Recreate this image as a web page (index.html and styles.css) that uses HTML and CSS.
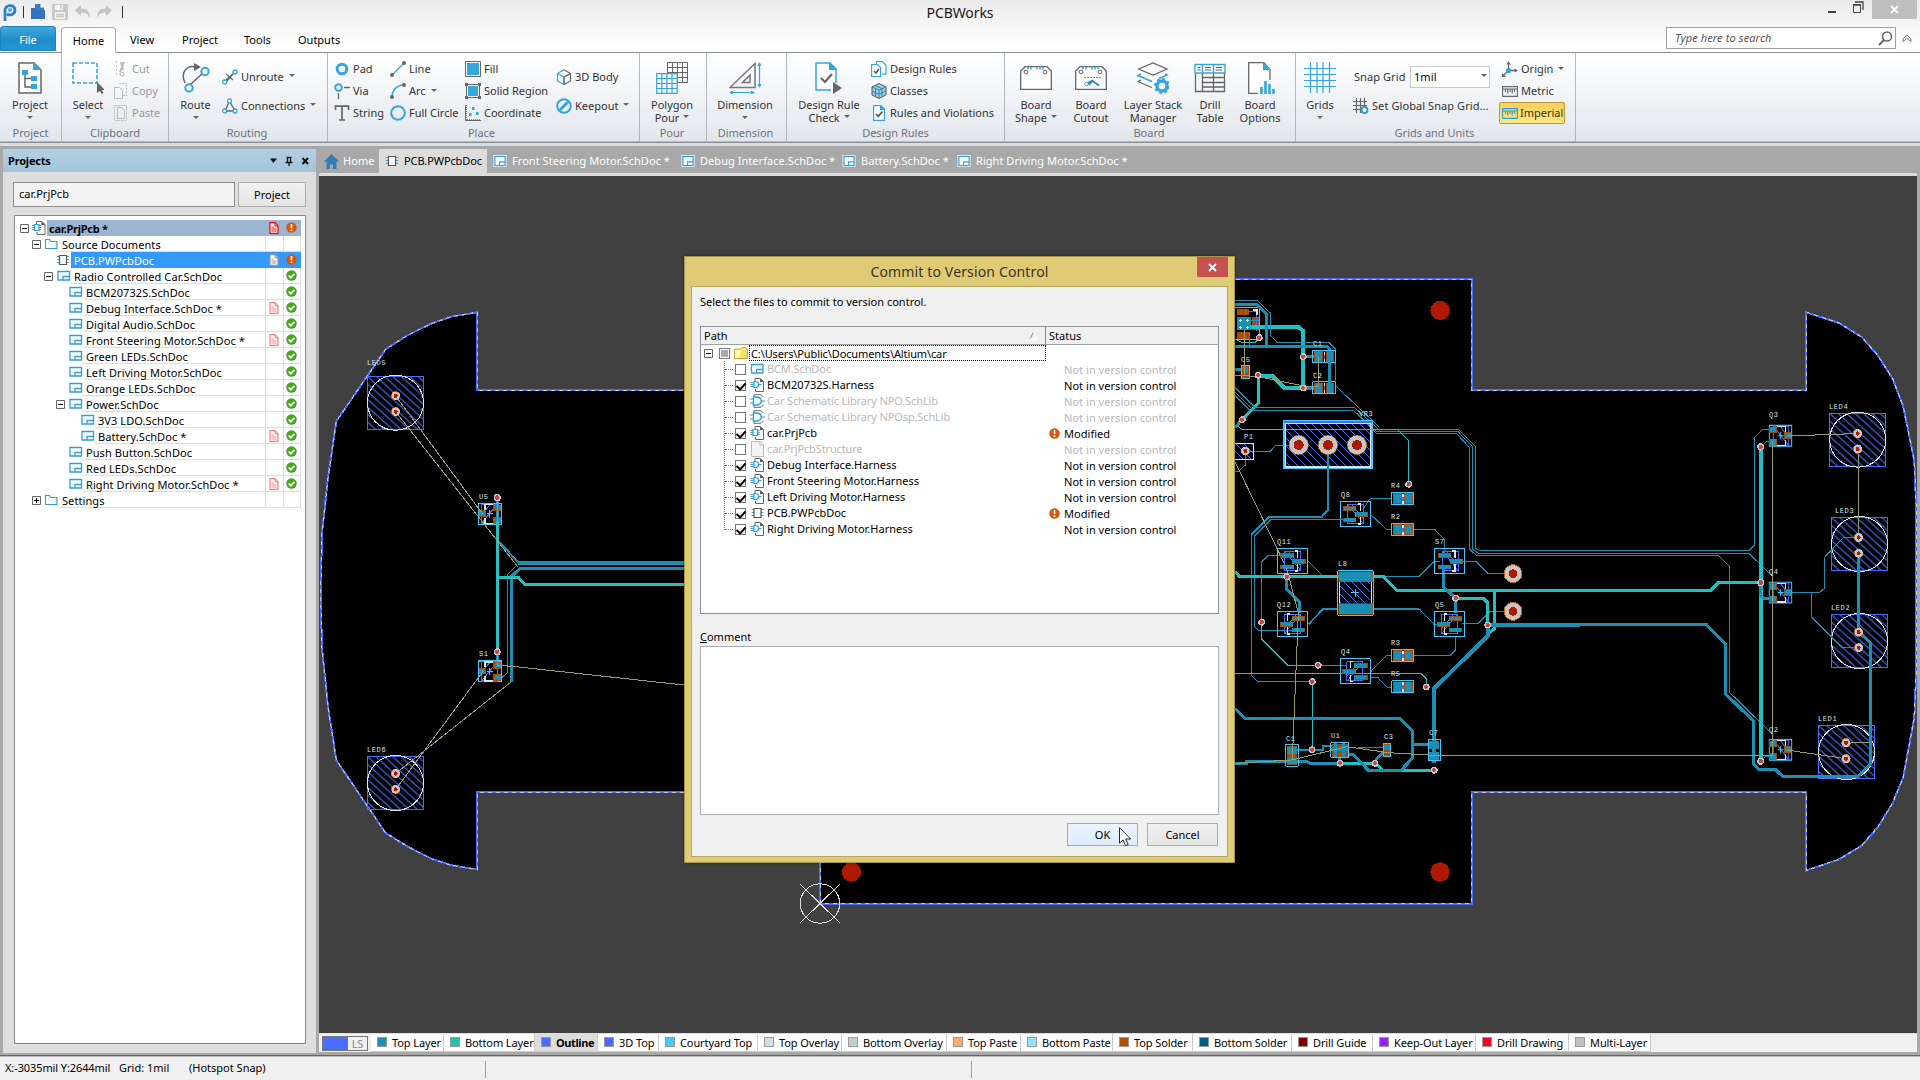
FILE: index.html
```html
<!DOCTYPE html>
<html lang="en">
<head>
<meta charset="utf-8">
<title>PCBWorks</title>
<link rel="stylesheet" href="styles.css">
</head>
<body>
<svg class="defs" width="0" height="0" aria-hidden="true">
  <defs>
    <symbol id="i-sch" viewBox="0 0 14 12"><path d="M1 1.500h11.500v8.500H1zM6 10V6.500h6.500" fill="none" stroke="#2f9fd8" stroke-width="1.300"/></symbol>
    <symbol id="i-schw" viewBox="0 0 14 13"><path d="M0 0h14v13H0z" fill="#fff"/><path d="M1.500 1.500h11v10h-11zM6.500 11.500V7.500h6" fill="none" stroke="#2f9fd8" stroke-width="1.300"/></symbol>
    <symbol id="i-pcb" viewBox="0 0 12 12"><path d="M0 2.500h12M0 5.500h12M0 8.500h12" stroke="#2f9fd8"/><path d="M2.500 1.500h7v9h-7z" fill="#fff" stroke="#555" stroke-width="1.200"/></symbol>
    <symbol id="i-folder" viewBox="0 0 13 12"><path d="M.5 10.500v-9h4l1.500 2h6v7z" fill="none" stroke="#2f9fd8" stroke-width="1.200"/></symbol>
    <symbol id="i-prj" viewBox="0 0 14 14"><path d="M4.500 3V.5h5.500l3 3v10H5V11" fill="#fff" stroke="#666"/><path d="M9.500.5v3.500H13z" fill="#555"/><path d="M0 4.500h9M0 6.500h9M0 8.500h9" stroke="#2f9fd8"/><path d="M2.500 3.500h4.500v6H2.500z" fill="#fff" stroke="#2f9fd8" stroke-width="1.200"/></symbol>
    <symbol id="i-har" viewBox="0 0 14 14"><path d="M4.500 3V.5h5.500l3 3v10H5V11" fill="#fff" stroke="#666"/><path d="M9.500.5v3.500H13z" fill="#555"/><path d="M0 4.500h3M0 6.500h3M0 8.500h3M8 6.500h3" stroke="#2f9fd8"/><path d="M3.500 3.500h2c3.500.5 3.500 5.500 0 6h-2z" fill="#fff" stroke="#2f9fd8" stroke-width="1.200"/></symbol>
    <symbol id="i-lib" viewBox="0 0 15 14"><path d="M4 3V.7h7l2.500 2.500M4 11v2.300h7l2.500-2.500" fill="none" stroke="#666"/><path d="M0 5h3.500M0 9h3.500M11 7h4" stroke="#2f9fd8" stroke-width="1.200"/><path d="M3.500 3h4c5 1 5 7 0 8h-4z" fill="#fff" stroke="#2f9fd8" stroke-width="1.400"/></symbol>
    <symbol id="i-blank" viewBox="0 0 14 16"><path d="M1 .5h9l3 3v12H1z" fill="#f4f4f4" stroke="#bbb"/><path d="M9.500.5V4H13" fill="#fff" stroke="#bbb"/></symbol>
    <symbol id="i-dir" viewBox="0 0 14 13"><path d="M.5 11.500V2h6l1.500-1.500h3.500L13.500 3v8.500z" fill="#f6e56a" stroke="#c3a92d"/><path d="M1 11V3h6.500L5 11z" fill="#fffbb0"/></symbol>
    <symbol id="i-doc" viewBox="0 0 10 12"><path d="M1 .7h5l3 3v7.600H1z" fill="#fff" stroke="currentColor" stroke-width="1.200"/><path d="M6 .7v3.300h3M2.500 5h2M2.500 7h5M2.500 9h5" fill="none" stroke="currentColor"/></symbol>
    <symbol id="i-ok" viewBox="0 0 11 11"><circle cx="5.500" cy="5.500" r="5.200" fill="#3fa616"/><path d="M2.600 5.400l2.100 2.200 3.700-3.700" fill="none" stroke="#fff" stroke-width="1.800"/></symbol>
    <symbol id="i-warn" viewBox="0 0 11 11"><circle cx="5.500" cy="5.500" r="5.200" fill="#d8560c"/><path d="M5.500 2v4.200M5.500 7.500v1.600" stroke="#fff" stroke-width="1.700"/></symbol>
    <symbol id="i-minus" viewBox="0 0 9 9"><path d="M.5.5h8v8h-8z" fill="#fff" stroke="#666"/><path d="M2 4.500h5" stroke="#000"/></symbol>
    <symbol id="i-plus" viewBox="0 0 9 9"><path d="M.5.5h8v8h-8z" fill="#fff" stroke="#666"/><path d="M2 4.500h5M4.500 2v5" stroke="#000"/></symbol>
    <symbol id="i-ruler" viewBox="0 0 16 11"><path d="M.6.6h14.800v9.800H.6zM.6 3h14.800M3.500 3v3M5.700 3v4.500M8 3v3M10.200 3v4.500M12.500 3v3" fill="none" stroke="currentColor" stroke-width="1.100"/></symbol>

    <pattern id="hatch" width="8.400" height="7.600" patternUnits="userSpaceOnUse"><path d="M-1-.9L9.400 8.500M-1 6.700L1 8.500M7.400-.9L9.400.9" stroke="#4a6cff" stroke-width="1.100"/></pattern>
    <pattern id="hatch2" width="24" height="24" patternUnits="userSpaceOnUse"><path d="M-2-2L26 26" stroke="#4a6cff" stroke-width="3"/></pattern>
    <g id="via"><circle r="10" fill="#c6c6c6"/><path d="M-6 0H6M0-6V6" stroke="#c04848" stroke-width="7"/></g>
    <g id="pad"><ellipse rx="14" ry="12.600" fill="#c06010"/><ellipse rx="12.500" ry="11.500" fill="#c6c6c6"/><ellipse rx="6" ry="5.800" fill="#b01800"/></g>
    <g id="led"><path d="M0 0h56.300v53H0z" fill="url(#hatch)" stroke="#4a6cff"/><ellipse cx="28.200" cy="26.500" rx="28" ry="27.500" fill="none" stroke="#d8e8ea"/></g>
    <g id="sot"><path d="M0 0h90v76H0z" fill="none" stroke="#44c8ff" stroke-width="3"/><path d="M22 9h48v58H22zM22 9l46 56M34 9l34 42" fill="none" stroke="#4a6cff" stroke-width="3"/><path d="M8 14h40v14H8zM8 49h40v14H8zM44 32h40v14H44z" fill="#a84a00"/><path d="M12 16h36v11H12zM12 51h36v11H12zM44 33h36v12H44z" fill="#1c8fb5"/><path d="M52 8h8v20M52 68h8V48" fill="none" stroke="#d8e8ea" stroke-width="4"/></g>
    <g id="res"><path d="M0 0h67v37H0z" fill="none" stroke="#44c8ff" stroke-width="3"/><path d="M4 3h26v32H4zM38 3h26v32H38z" fill="#a84a00"/><path d="M7 5h20v28H7zM41 5h20v28H41z" fill="#1c8fb5"/><path d="M34 4v9M34 25v9" stroke="#d8e8ea" stroke-width="4"/><path d="M34 13v12" stroke="#4a6cff" stroke-width="4"/></g>
    <g id="trn"><path d="M0 0h67v56H0z" fill="none" stroke="#44c8ff" stroke-width="3"/><path d="M12 2h46v52H12zM14 4l42 48M34 4l22 26" fill="none" stroke="#4a6cff" stroke-width="3"/><path d="M24 3h24v14M24 54h24V40" fill="none" stroke="#d8e8ea" stroke-width="4"/><path d="M0 3h23v18H0zM0 36h23v18H0zM45 19h21v17H45z" fill="#a84a00"/><path d="M1 5h18v14H1zM1 38h18v14H1zM47 21h18v13H47z" fill="#1c8fb5"/><path d="M34 18v20M25 28h18" stroke="#44c8ff" stroke-width="3"/></g>
  </defs>
</svg>

<header class="titlebar">
  <div class="caption">
    <div class="quick">
      <svg class="q-logo" width="14" height="18" viewBox="0 0 14 18"><path d="M2 17V6.500C2 0 12 0 12 6c0 4.500-5 6-8 4" fill="none" stroke="#2e7fc6" stroke-width="2.800"/><circle cx="7" cy="6" r="2" fill="#4da7e0"/></svg>
      <i class="bar"></i>
      <svg class="q-open" width="15" height="16" viewBox="0 0 15 16"><path d="M4 0h5.500L13 3.500V12H4z" fill="#3b7dc4"/><path d="M9.500 0v3.500H13z" fill="#fff"/><path d="M0 4h5l2 2h7v9H0z" fill="#3173be"/></svg>
      <svg class="q-save" width="16" height="16" viewBox="0 0 16 16"><path d="M0 0h16v16H0z" fill="#c9c9c9"/><path d="M3 1h8v5H3zM3 8h10v7H3z" fill="#f3f3f3"/><path d="M9 1v4M4 10.500h8M4 12.500h8" stroke="#c9c9c9" stroke-width="1.500"/></svg>
      <svg class="q-undo" width="16" height="14" viewBox="0 0 16 14"><path d="M0 5.500L6 0v3.500c6 0 9 3 9 10C13 9 11 7.500 6 7.500V11z" fill="#c4c4c4"/></svg>
      <svg class="q-redo" width="16" height="14" viewBox="0 0 16 14"><path d="M16 5.500L10 0v3.500c-6 0-9 3-9 10C3 9 5 7.500 10 7.500V11z" fill="#c4c4c4"/></svg>
      <i class="bar"></i>
    </div>
    <div class="apptitle">PCBWorks</div>
    <div class="winbtns">
      <svg width="36" height="14" viewBox="0 0 36 14"><path d="M0 12h8" stroke="#444" stroke-width="2"/><path d="M25.500 4.500h7v8h-7z" fill="none" stroke="#444"/><path d="M25 5h8M27 2h8v8" fill="none" stroke="#444" stroke-width="1.300"/></svg>
      <div class="winclose"><svg width="9" height="9" viewBox="0 0 9 9"><path d="M1 1l7 7M8 1L1 8" stroke="#fff" stroke-width="1.800"/></svg></div>
    </div>
  </div>
  <nav class="menubar">
    <span class="file">File</span>
    <span class="mtab on">Home</span>
    <span class="mtab m-view">View</span>
    <span class="mtab m-proj">Project</span>
    <span class="mtab m-tools">Tools</span>
    <span class="mtab m-out">Outputs</span>
    <div class="search"><span>Type here to search</span><svg width="15" height="15" viewBox="0 0 15 15"><circle cx="9" cy="5.500" r="4.500" fill="none" stroke="#666" stroke-width="1.500"/><path d="M6 9l-5 5" stroke="#666" stroke-width="2"/></svg></div>
    <svg class="chev" width="10" height="9" viewBox="0 0 10 9"><path d="M1 5l4-4 4 4v2.500L5 4.500 1 7.500z" fill="none" stroke="#777f88" stroke-width="1"/></svg>
  </nav>
</header>

<section class="ribbon">
  <div class="group g1"><div class="gbody">
    <div class="big"><svg width="32" height="32" viewBox="0 0 32 32"><path d="M5 1h15l7 7v23H5z" fill="#fff" stroke="#666" stroke-width="1.500"/><path d="M19 0v8h8z" fill="#36a5dd"/><path d="M11 12v13h6M11 16.500h6" fill="none" stroke="#666" stroke-width="1.500"/><path d="M8 8h6v5H8zM17 14h6v5h-6zM17 22h6v5h-6z" fill="#36a5dd"/></svg><span>Project</span><span><b class="solo"></b></span></div>
  </div><div class="glabel">Project</div></div>

  <div class="group g2"><div class="gbody">
    <div class="big"><svg width="32" height="32" viewBox="0 0 32 32"><path d="M1 1h24v20H1z" fill="none" stroke="#36a5dd" stroke-width="1.600" stroke-dasharray="4 2"/><path d="M25 20v11l3-2 1.500 3 2-1-1.500-3h3z" fill="#666"/></svg><span>Select</span><span><b class="solo"></b></span></div>
    <div class="col dim">
      <div class="cmd"><svg width="16" height="16" viewBox="0 0 16 16"><path d="M3.500 0v16" stroke="#ccc" stroke-dasharray="2 2"/><path d="M11 1L7 11M8 1l2 8" stroke="#bbb" stroke-width="2"/><circle cx="9" cy="13" r="2" fill="none" stroke="#bbb"/></svg>Cut</div>
      <div class="cmd"><svg width="16" height="16" viewBox="0 0 16 16"><path d="M1.500 4.500h5l3 3v8h-8z" fill="none" stroke="#bbb"/><path d="M6 .5h7.500v12H10" fill="none" stroke="#bbb" stroke-dasharray="2 1"/></svg>Copy</div>
      <div class="cmd"><svg width="16" height="16" viewBox="0 0 16 16"><path d="M4.500 2.500h4l3 3v8h-7z" fill="none" stroke="#bbb"/><path d="M1.500.5h12v15h-12z" fill="none" stroke="#bbb" stroke-dasharray="2 1"/></svg>Paste</div>
    </div>
  </div><div class="glabel">Clipboard</div></div>

  <div class="group g3"><div class="gbody">
    <div class="big"><svg width="32" height="32" viewBox="0 0 32 32"><path d="M5 21C0 10 7 3 16 5" fill="none" stroke="#666" stroke-width="1.500"/><path d="M14 1l7 4-7 4z" fill="#666"/><path d="M10 23L23 11" stroke="#666" stroke-width="1.500"/><circle cx="25" cy="9.500" r="3.700" fill="#fff" stroke="#36a5dd" stroke-width="2"/><circle cx="9" cy="26" r="3.700" fill="#fff" stroke="#36a5dd" stroke-width="2"/></svg><span>Route</span><span><b class="solo"></b></span></div>
    <div class="col two">
      <div class="cmd"><svg width="16" height="16" viewBox="0 0 16 16"><path d="M4 11l8-7M4 5l7 6M11 5l-6 7" stroke="#666" stroke-width="1.300"/><circle cx="13" cy="3" r="2" fill="#fff" stroke="#36a5dd" stroke-width="1.300"/><circle cx="2.700" cy="13" r="2" fill="#fff" stroke="#36a5dd" stroke-width="1.300"/></svg>Unroute<b></b></div>
      <div class="cmd"><svg width="16" height="16" viewBox="0 0 16 16"><path d="M3 13L7.500 3 13 13z" fill="none" stroke="#666" stroke-width="1.300"/><circle cx="7.500" cy="3" r="2" fill="#fff" stroke="#36a5dd" stroke-width="1.300"/><circle cx="2.700" cy="13" r="2" fill="#fff" stroke="#36a5dd" stroke-width="1.300"/><circle cx="13" cy="13" r="2" fill="#fff" stroke="#36a5dd" stroke-width="1.300"/></svg>Connections<b></b></div>
    </div>
  </div><div class="glabel">Routing</div></div>

  <div class="group g4"><div class="gbody">
    <div class="col c1">
      <div class="cmd"><svg width="16" height="16" viewBox="0 0 16 16"><circle cx="8" cy="8" r="4.800" fill="none" stroke="#36a5dd" stroke-width="3"/></svg>Pad</div>
      <div class="cmd"><svg width="16" height="16" viewBox="0 0 16 16"><circle cx="4.500" cy="4.500" r="3.300" fill="none" stroke="#36a5dd" stroke-width="2"/><path d="M10 4.500h6M4.500 10v6" stroke="#666" stroke-width="1.300"/></svg>Via</div>
      <div class="cmd"><svg width="16" height="16" viewBox="0 0 16 16"><path d="M1.500 5V1.200h13V5M8 1v14M5 15h6" fill="none" stroke="#666" stroke-width="1.700"/></svg>String</div>
    </div>
    <div class="col c2">
      <div class="cmd"><svg width="16" height="16" viewBox="0 0 16 16"><path d="M2 14L14 2" stroke="#36a5dd" stroke-width="1.300"/><circle cx="2" cy="14" r="2" fill="#666"/><circle cx="14" cy="2" r="2" fill="#666"/></svg>Line</div>
      <div class="cmd"><svg width="16" height="16" viewBox="0 0 16 16"><path d="M2 14C2 7 7 2 14 2" fill="none" stroke="#36a5dd" stroke-width="1.500"/><circle cx="2" cy="14" r="2" fill="#666"/><circle cx="14" cy="2" r="2" fill="#666"/></svg>Arc<b></b></div>
      <div class="cmd"><svg width="16" height="16" viewBox="0 0 16 16"><circle cx="8" cy="8" r="6.800" fill="none" stroke="#36a5dd" stroke-width="2"/></svg>Full Circle</div>
    </div>
    <div class="col c3">
      <div class="cmd"><svg width="16" height="16" viewBox="0 0 16 16"><path d="M.5.5h15v15H.5z" fill="#fff" stroke="#666"/><path d="M2 2h12v12H2z" fill="#36a5dd"/></svg>Fill</div>
      <div class="cmd"><svg width="16" height="16" viewBox="0 0 16 16"><path d="M3 3h10v10H3z" fill="#36a5dd"/><path d="M1.500 1.500h13v13h-13z" fill="none" stroke="#666"/><path d="M0 0h3v3H0zM13 0h3v3h-3zM0 13h3v3H0zM13 13h3v3h-3z" fill="#666"/></svg>Solid Region</div>
      <div class="cmd"><svg width="16" height="16" viewBox="0 0 16 16"><path d="M1 0v15h15" fill="none" stroke="#666" stroke-width="1.500" stroke-dasharray="1 1"/><path d="M.5 0v15.500H16" fill="none" stroke="#666"/><path d="M7 2h2.500v3H7zM4 8h2.500v3H4zM11 7h2.500v3H11z" fill="#36a5dd"/></svg>Coordinate</div>
    </div>
    <div class="col two">
      <div class="cmd"><svg width="16" height="16" viewBox="0 0 16 16"><path d="M8 8l6.500-3.500M8 8v7.500M8 8L1.500 4.500M8 15.500L1.500 12V4.500L8 .8" fill="none" stroke="#36a5dd" stroke-width="1.200"/><path d="M8 .8l6.500 3.700V12L8 15.500V8l6.500-3.500" fill="none" stroke="#666" stroke-width="1.200"/></svg>3D Body</div>
      <div class="cmd"><svg width="16" height="16" viewBox="0 0 16 16"><circle cx="8" cy="8" r="6.800" fill="none" stroke="#36a5dd" stroke-width="2"/><path d="M4 12l8-8" stroke="#36a5dd" stroke-width="3"/></svg>Keepout<b></b></div>
    </div>
  </div><div class="glabel">Place</div></div>

  <div class="group g5"><div class="gbody">
    <div class="big"><svg width="32" height="32" viewBox="0 0 32 32"><path d="M11.500.5h20v20h-20zM16.500 0v20M21.500 0v20M26.500 0v20M11 5.500h20M11 10.500h20M11 15.500h20" fill="none" stroke="#666"/><path d="M0 11.500h21v20H.5z" fill="#f5f6f8"/><path d="M.7 11.700h20.500v19.600H.7zM5.800 12v20M10.900 12v20M16 12v20M0 16.500h21M0 21.500h21M0 26.500h21" fill="none" stroke="#36a5dd" stroke-width="1.200"/></svg><span>Polygon</span><span>Pour<b></b></span></div>
  </div><div class="glabel">Pour</div></div>

  <div class="group g6"><div class="gbody">
    <div class="big"><svg width="32" height="32" viewBox="0 0 32 32"><path d="M1 25.500h25V1.500zM13.500 20.500h7.500V13z" fill="none" stroke="#777" stroke-width="1.500"/><path d="M30.500 1v24M1 30.500h24" stroke="#36a5dd" stroke-width="1.200"/><path d="M28.500 4l2-4 2 4zM28.500 22l2 4 2-4zM4 28.500l-4 2 4 2zM22 28.500l4 2-4 2z" fill="#36a5dd"/></svg><span>Dimension</span><span><b class="solo"></b></span></div>
  </div><div class="glabel">Dimension</div></div>

  <div class="group g7"><div class="gbody">
    <div class="big"><svg width="32" height="32" viewBox="0 0 32 32"><path d="M18 28H3V1h14l6 6v14" fill="#fff" stroke="#36a5dd" stroke-width="1.500"/><path d="M16 0v8h8z" fill="#36a5dd"/><path d="M8 16l4 4 7-8" fill="none" stroke="#666" stroke-width="2.200"/><path d="M20 20l9 6-9 6z" fill="#666"/></svg><span>Design Rule</span><span>Check<b></b></span></div>
    <div class="col">
      <div class="cmd"><svg width="16" height="16" viewBox="0 0 16 16"><path d="M5.500 3V.600h5.500l4 3.500v9H11" fill="none" stroke="#36a5dd" stroke-width="1.200"/><path d="M.6 3.600h6l3 3v9h-9z" fill="#fff" stroke="#36a5dd" stroke-width="1.200"/><path d="M3 10l2 2 3-4" fill="none" stroke="#555" stroke-width="1.500"/></svg>Design Rules</div>
      <div class="cmd"><svg width="16" height="16" viewBox="0 0 16 16"><path d="M1 4l7-3.500L15 4v8l-7 3.500L1 12z" fill="#9fcde5" stroke="#555"/><path d="M8 7v8M1 4l7 3 7-3M4 2.500l7 3.200v8M4.500 6v8M1 8l7 3.300 7-3.300" fill="none" stroke="#2e86b5"/></svg>Classes</div>
      <div class="cmd"><svg width="16" height="16" viewBox="0 0 16 16"><path d="M2.600.6h7.400l3.500 3.500v11.300H2.600z" fill="#fff" stroke="#36a5dd" stroke-width="1.200"/><path d="M9 0v5h5z" fill="#36a5dd"/><path d="M5 9l2.300 2.500 4-5" fill="none" stroke="#555" stroke-width="1.700"/></svg>Rules and Violations</div>
    </div>
  </div><div class="glabel">Design Rules</div></div>

  <div class="group g8"><div class="gbody">
    <div class="big w62"><svg width="32" height="32" viewBox="0 0 32 32"><path d="M.7 27.300V9L5 4.700h22L31.300 9v18.300z" fill="#fff" stroke="#666" stroke-width="1.300"/><path d="M8 4.500v3M11 4.500v3M17 4.500v3M20 4.500v3M23 4.500v3" stroke="#36a5dd" stroke-width="1.500"/><circle cx="6" cy="10" r="1.900" fill="none" stroke="#666"/><circle cx="25" cy="10" r="1.900" fill="none" stroke="#666"/></svg><span>Board</span><span>Shape<b></b></span></div>
    <div class="big w48"><svg width="32" height="32" viewBox="0 0 32 32"><path d="M.7 27.300V9L5 4.700h22L31.300 9v18.300z" fill="#fff" stroke="#666" stroke-width="1.300"/><path d="M8 4.500v3M11 4.500v3M17 4.500v3M20 4.500v3M23 4.500v3" stroke="#36a5dd" stroke-width="1.500"/><circle cx="6" cy="10" r="1.900" fill="none" stroke="#666"/><circle cx="25" cy="10" r="1.900" fill="none" stroke="#666"/><path d="M9 15.500h17" stroke="#36a5dd" stroke-dasharray="2 1"/><circle cx="11.500" cy="22" r="1.800" fill="none" stroke="#36a5dd"/><path d="M13 21l4-2.500 7 5M14 23l3-4" fill="none" stroke="#2e86b5" stroke-width="1.800"/></svg><span>Board</span><span>Cutout</span></div>
    <div class="big w76"><svg width="32" height="32" viewBox="0 0 32 32"><path d="M1.500 7L16 1l14 6-14 6z" fill="#fff" stroke="#666" stroke-width="1.300"/><path d="M4 12l-3 1.500 14 6M28 12l2 1-8 3.500" fill="none" stroke="#36a5dd" stroke-width="1.500"/><path d="M4 18l-3 1.500 14 6" fill="none" stroke="#666" stroke-width="1.300"/><circle cx="25" cy="24" r="5" fill="#fff" stroke="#36a5dd" stroke-width="3.500"/><circle cx="25" cy="24" r="7" fill="none" stroke="#36a5dd" stroke-width="2" stroke-dasharray="2.750 2.750"/></svg><span>Layer Stack</span><span>Manager</span></div>
    <div class="big w38"><svg width="32" height="32" viewBox="0 0 32 32"><path d="M1.500 11v18.500h29V11M8.500 11v18M19.500 11v18M8 15.500h22.500M8 20.500h22.500M8 25h22.500" fill="none" stroke="#666" stroke-width="1.300"/><path d="M1 2.500h30v8.500H1zM8.500 3v8M19.500 3v8" fill="none" stroke="#36a5dd" stroke-width="1.400"/><path d="M3.500 5.500h3M3.500 8h3M11 5.500h6M11 8h6M22 5.500h6M22 8h6" stroke="#666"/></svg><span>Drill</span><span>Table</span></div>
    <div class="big w62"><svg width="32" height="32" viewBox="0 0 32 32"><path d="M14 31.300H4.700V.7H20l6 7V18" fill="#fff" stroke="#666" stroke-width="1.300"/><path d="M19 0v8h8z" fill="#36a5dd"/><path d="M17.500 32v-7M21.500 32V19M25.500 32V22M29.500 32v-5" stroke="#36a5dd" stroke-width="2.600"/></svg><span>Board</span><span>Options</span></div>
  </div><div class="glabel">Board</div></div>

  <div class="group g9"><div class="gbody">
    <div class="big w48"><svg width="32" height="32" viewBox="0 0 32 32"><path d="M6.500 0v31M13 0v31M19 0v31M25.500 0v31M0 6.500h32M0 12.500h32M0 18.500h32M0 24.500h32" stroke="#36a5dd" stroke-width="1.200"/></svg><span>Grids</span><span><b class="solo"></b></span></div>
    <div class="col two gridcol">
      <div class="cmd snap"><span>Snap Grid</span><div class="combo">1mil<b></b></div></div>
      <div class="cmd"><svg width="16" height="16" viewBox="0 0 16 16"><path d="M3.500 0v15M7.500 0v15M11.500 0v8M0 3.500h14M0 7.500h14M0 11.500h7" stroke="#666" stroke-width="1.200"/><circle cx="11.500" cy="12" r="3" fill="#fff" stroke="#2e9ccc" stroke-width="2"/></svg>Set Global Snap Grid...</div>
    </div>
    <div class="col">
      <div class="cmd"><svg width="16" height="16" viewBox="0 0 16 16"><path d="M6.500 8V2M8 9.500h6M5 11l-4 4" stroke="#666" stroke-width="1.300"/><path d="M4.500 3.500L6.500 0l2 3.500zM12.500 7.500l3.500 2-3.500 2zM0 12v4h4z" fill="#666"/><circle cx="6.500" cy="9.500" r="2.600" fill="#36a5dd"/></svg>Origin<b></b></div>
      <div class="cmd gray"><svg width="16" height="11"><use href="#i-ruler"/></svg>Metric</div>
      <div class="cmd imp"><svg width="16" height="11"><use href="#i-ruler"/></svg>Imperial</div>
    </div>
  </div><div class="glabel">Grids and Units</div></div>
</section>

<main class="work">
  <aside class="panel">
    <div class="phead"><span>Projects</span>
      <svg width="46" height="10" viewBox="0 0 46 10"><path d="M0 2.500h7L3.500 7z" fill="#111"/><path d="M17.500 1v5M20.500 1v5M16.500 1.500h5M15.500 6.500h7M19 6v4" fill="none" stroke="#111" stroke-width="1.300"/><path d="M32.500 2l5.500 6M38 2L32.500 8" stroke="#111" stroke-width="2"/></svg>
    </div>
    <div class="psel"><div class="pinput">car.PrjPcb</div><div class="pbtn">Project</div></div>
    <div class="tree">
      <div class="row root"><svg class="ex" width="9" height="9"><use href="#i-minus"/></svg><svg class="ic" width="14" height="14"><use href="#i-prj"/></svg><span class="nm">car.PrjPcb *</span><span class="st red"><svg width="10" height="12"><use href="#i-doc"/></svg></span><span class="st"><svg width="11" height="11"><use href="#i-warn"/></svg></span></div>
      <div class="row d1"><svg class="ex" width="9" height="9"><use href="#i-minus"/></svg><svg class="ic" width="13" height="12"><use href="#i-folder"/></svg><span class="nm">Source Documents</span><span class="st"></span><span class="st"></span></div>
      <div class="row d2 sel"><i class="ex"></i><svg class="ic" width="12" height="12"><use href="#i-pcb"/></svg><span class="nm">PCB.PWPcbDoc</span><span class="st gry"><svg width="10" height="12"><use href="#i-doc"/></svg></span><span class="st"><svg width="11" height="11"><use href="#i-warn"/></svg></span></div>
      <div class="row d2"><svg class="ex" width="9" height="9"><use href="#i-minus"/></svg><svg class="ic" width="14" height="12"><use href="#i-sch"/></svg><span class="nm">Radio Controlled Car.SchDoc</span><span class="st"></span><span class="st"><svg width="11" height="11"><use href="#i-ok"/></svg></span></div>
      <div class="row d3"><i class="ex"></i><svg class="ic" width="14" height="12"><use href="#i-sch"/></svg><span class="nm">BCM20732S.SchDoc</span><span class="st"></span><span class="st"><svg width="11" height="11"><use href="#i-ok"/></svg></span></div>
      <div class="row d3"><i class="ex"></i><svg class="ic" width="14" height="12"><use href="#i-sch"/></svg><span class="nm">Debug Interface.SchDoc *</span><span class="st pnk"><svg width="10" height="12"><use href="#i-doc"/></svg></span><span class="st"><svg width="11" height="11"><use href="#i-ok"/></svg></span></div>
      <div class="row d3"><i class="ex"></i><svg class="ic" width="14" height="12"><use href="#i-sch"/></svg><span class="nm">Digital Audio.SchDoc</span><span class="st"></span><span class="st"><svg width="11" height="11"><use href="#i-ok"/></svg></span></div>
      <div class="row d3"><i class="ex"></i><svg class="ic" width="14" height="12"><use href="#i-sch"/></svg><span class="nm">Front Steering Motor.SchDoc *</span><span class="st pnk"><svg width="10" height="12"><use href="#i-doc"/></svg></span><span class="st"><svg width="11" height="11"><use href="#i-ok"/></svg></span></div>
      <div class="row d3"><i class="ex"></i><svg class="ic" width="14" height="12"><use href="#i-sch"/></svg><span class="nm">Green LEDs.SchDoc</span><span class="st"></span><span class="st"><svg width="11" height="11"><use href="#i-ok"/></svg></span></div>
      <div class="row d3"><i class="ex"></i><svg class="ic" width="14" height="12"><use href="#i-sch"/></svg><span class="nm">Left Driving Motor.SchDoc</span><span class="st"></span><span class="st"><svg width="11" height="11"><use href="#i-ok"/></svg></span></div>
      <div class="row d3"><i class="ex"></i><svg class="ic" width="14" height="12"><use href="#i-sch"/></svg><span class="nm">Orange LEDs.SchDoc</span><span class="st"></span><span class="st"><svg width="11" height="11"><use href="#i-ok"/></svg></span></div>
      <div class="row d3"><svg class="ex" width="9" height="9"><use href="#i-minus"/></svg><svg class="ic" width="14" height="12"><use href="#i-sch"/></svg><span class="nm">Power.SchDoc</span><span class="st"></span><span class="st"><svg width="11" height="11"><use href="#i-ok"/></svg></span></div>
      <div class="row d4"><i class="ex"></i><svg class="ic" width="14" height="12"><use href="#i-sch"/></svg><span class="nm">3V3 LDO.SchDoc</span><span class="st"></span><span class="st"><svg width="11" height="11"><use href="#i-ok"/></svg></span></div>
      <div class="row d4"><i class="ex"></i><svg class="ic" width="14" height="12"><use href="#i-sch"/></svg><span class="nm">Battery.SchDoc *</span><span class="st pnk"><svg width="10" height="12"><use href="#i-doc"/></svg></span><span class="st"><svg width="11" height="11"><use href="#i-ok"/></svg></span></div>
      <div class="row d3"><i class="ex"></i><svg class="ic" width="14" height="12"><use href="#i-sch"/></svg><span class="nm">Push Button.SchDoc</span><span class="st"></span><span class="st"><svg width="11" height="11"><use href="#i-ok"/></svg></span></div>
      <div class="row d3"><i class="ex"></i><svg class="ic" width="14" height="12"><use href="#i-sch"/></svg><span class="nm">Red LEDs.SchDoc</span><span class="st"></span><span class="st"><svg width="11" height="11"><use href="#i-ok"/></svg></span></div>
      <div class="row d3"><i class="ex"></i><svg class="ic" width="14" height="12"><use href="#i-sch"/></svg><span class="nm">Right Driving Motor.SchDoc *</span><span class="st pnk"><svg width="10" height="12"><use href="#i-doc"/></svg></span><span class="st"><svg width="11" height="11"><use href="#i-ok"/></svg></span></div>
      <div class="row d1"><svg class="ex" width="9" height="9"><use href="#i-plus"/></svg><svg class="ic" width="13" height="12"><use href="#i-folder"/></svg><span class="nm">Settings</span><span class="st"></span><span class="st"></span></div>
    </div>
  </aside>

  <section class="editor">
    <div class="doctabs">
      <div class="dt dhome"><svg width="15" height="15" viewBox="0 0 15 15"><path d="M7.500 0L0 7.500h2.500V15h3.500v-4.500h3V15h3.500V7.500H15z" fill="#2d7fc0"/></svg>Home</div>
      <div class="dt on"><svg width="12" height="12"><use href="#i-pcb"/></svg>PCB.PWPcbDoc</div>
      <div class="dt d-front"><svg width="14" height="12"><use href="#i-schw"/></svg>Front Steering Motor.SchDoc *</div>
      <div class="dt d-debug"><svg width="14" height="12"><use href="#i-schw"/></svg>Debug Interface.SchDoc *</div>
      <div class="dt d-batt"><svg width="14" height="12"><use href="#i-schw"/></svg>Battery.SchDoc *</div>
      <div class="dt d-right"><svg width="14" height="12"><use href="#i-schw"/></svg>Right Driving Motor.SchDoc *</div>
    </div>

    <svg class="board" width="1598" height="857" viewBox="319 176 1598 857">
      <path class="outline" d="M820 279H1471.700V390.300H1806.300V312.200L1839 323 1861.700 337 1878 355.500 1892.700 378.800 1903.300 406.500 1914.300 461 1916.300 511V670L1914.300 718 1903.300 777 1892.700 803 1878 827 1861.700 845.700 1839 859.400 1806.300 870.500V792.400H1471.700V903.500H820.300V792.400H477.300V869.500L451.300 865.300 431 858.600 408 846.800 385.700 833.100 336.300 760.200 328 707 322 647.800 320.700 596 322 533 328 477.600 336.300 421.300 385.700 349.200 408 335 431 323.700 451.300 316.600 477.300 312.200V390.300H820z"/>
      <path class="outdash" d="M820 279H1471.700V390.300H1806.300V312.200L1839 323 1861.700 337 1878 355.500 1892.700 378.800 1903.300 406.500 1914.300 461 1916.300 511V670L1914.300 718 1903.300 777 1892.700 803 1878 827 1861.700 845.700 1839 859.400 1806.300 870.500V792.400H1471.700V903.500H820.300V792.400H477.300V869.500L451.300 865.300 431 858.600 408 846.800 385.700 833.100 336.300 760.200 328 707 322 647.800 320.700 596 322 533 328 477.600 336.300 421.300 385.700 349.200 408 335 431 323.700 451.300 316.600 477.300 312.200V390.300H820z"/>
      <g fill="#b01800"><circle cx="1440" cy="310.300" r="9.600"/><circle cx="1440" cy="872" r="9.600"/><circle cx="851.500" cy="872" r="9.600"/></g>
      <g fill="none" stroke="#ddd"><circle cx="820" cy="903.500" r="19.700"/><path d="M800 884l40 39M840 884l-40 39"/></g>

      <!-- LED footprints -->
      <use href="#led" x="367.300" y="376.200"/><use href="#led" x="367.300" y="756.500"/>
      <use href="#led" x="1829.500" y="413.200"/><use href="#led" x="1831.300" y="517.500"/><use href="#led" x="1831.300" y="614.500"/><use href="#led" x="1818.300" y="725.500"/>

      <!-- front end of the car -->
      <g transform="translate(318 300) scale(.33333 .36991)">
        <g class="net">
          <path class="t w2" d="M539 650L600 708H1110M600 714H1110"/>
          <path class="t w1" d="M598 716L568 743V1008L552 1020"/>
          <path class="t w3" d="M1110 726H605L580 748V1032"/>
          <path class="b w3" d="M538 535V952M540 749H600L621 769H1110"/>
          <path class="t w3" d="M538 540V600M538 952V990"/>
        </g>
        <use href="#trn" transform="translate(550 550) scale(-1.030 1)"/><use href="#trn" transform="translate(550 976) scale(-1.030 1)"/>
        <path class="b w3" d="M538 600V940"/>
        <path class="r" d="M233 259L495 580M233 302L600 722M495 1004L233 1323M580 1032L233 1280M538 952V988L580 990 1110 1042M539 545V950"/>
        <use href="#pad" x="233" y="259"/><use href="#pad" x="233" y="302"/><use href="#pad" x="233" y="1280"/><use href="#pad" x="233" y="1323"/>
        <use href="#via" x="538" y="534"/><use href="#via" x="538" y="951"/>
      </g>

      <!-- rear end of the car -->
      <g transform="translate(1560 300) scale(.33333 .36991)">
        <path class="t w1" d="M0 677H567L583 663V372L608 350H630M0 685H567L638 748V770M0 690H475L508 720V1060L638 1175V1190M602 397L620 382H636M695 790H780L794 779V695L850 642H896M755 790V857L845 939H896"/>
        <path class="t w3" d="M0 878H440L497 930V1065L580 1138V1254L596 1269H646L667 1287H896L931 1255V926L896 898V685"/>
        <path class="b w4" d="M602 400V1247"/><path class="b w3" d="M0 785H452L475 764H600"/>
        <path class="t w3" d="M602 770V798L612 807H636"/><path class="t w1" d="M602 1247L618 1233H636"/>
        <use href="#trn" x="628" y="339"/><use href="#trn" x="628" y="763"/><use href="#trn" x="628" y="1188"/>
        <path class="r" d="M637 382V1231H0M684 366H732L893 361M893 403L896 440V642M684 1217L858 1240M858 1197H931"/>
        <use href="#pad" x="893" y="361"/><use href="#pad" x="893" y="403"/><use href="#pad" x="896" y="642"/><use href="#pad" x="896" y="685"/><use href="#pad" x="896" y="898"/><use href="#pad" x="896" y="940"/><use href="#pad" x="858" y="1197"/><use href="#pad" x="858" y="1240"/>
        <use href="#via" x="602" y="397"/><use href="#via" x="602" y="764"/><use href="#via" x="602" y="1247"/>
      </g>

      <!-- power and controller section -->
      <g transform="translate(1230 270) scale(.33333)">
        <path d="M0 112H88V208H0z" fill="none" stroke="#44c8ff" stroke-width="3"/>
        <path d="M20 116h36v20H20zM66 140h22v40H66zM20 186h36v22H20z" fill="#a84a00"/>
        <path d="M36 116v20M48 116v20M64 152h24M64 166h24M36 186v22M60 186v40" class="t w1"/>
        <path d="M58 124h22v60" fill="none" stroke="#4a6cff" stroke-width="4"/><path d="M68 120h14v16" fill="none" stroke="#d8e8ea" stroke-width="5"/>
        <path d="M22 140h40v40H22z" fill="#1c8fb5"/><path d="M32 146v10M27 151h10M52 146v10M47 151h10M32 167v10M27 172h10M52 167v10M47 172h10" stroke="#d8e8ea" stroke-width="3"/>
        <path class="b w4" d="M60 171H205L220 183V354M85 317H127L165 355H220"/>
        <path class="b w3" d="M85 317V400L34 452"/>
        <path class="t w3" d="M15 103H80L110 133V229M15 229H290L298 236V350M220 260H255M220 355H255M34 450L15 474M0 298H46"/>
        <path class="t w1" d="M15 92H83L122 130V197L141 217H296L317 238V348L447 470M15 352L75 412H373L447 479H686L737 530V835L750 841H1050M0 352L70 421H370L440 485H684L728 530V838L745 850H1050M0 362L60 421M380 431L440 491H680L719 533V838L740 857H1050M60 545H120L137 526H205M46 550V585L26 604H15M400 716L421 685H485"/>
        <path class="b w1" d="M25 470L35 478H502L536 512V640M15 207L35 217H75L88 205"/>
        <path d="M36 286h22v40H36z" fill="#a84a00" stroke="#44c8ff" stroke-width="3"/><path d="M40 292h14v18H40z" fill="#1c8fb5"/>
        <use href="#res" x="249" y="241"/><use href="#res" x="249" y="335"/>
        <path class="t w3" d="M298 250V350"/>
        <path d="M162 453H427V595H162z" fill="url(#hatch2)" stroke="#44c8ff" stroke-width="5"/><path d="M166 460h256v131H166z" fill="none" stroke="#d8e8ea" stroke-width="4"/><path d="M162 456h264" stroke="#4a6cff" stroke-width="6"/>
        <path class="b w1" d="M170 478H428"/>
        <path class="t w2" d="M293 555V720L275 741H117L65 793"/>
        <g fill="#c6c6c6" stroke="#c06010" stroke-width="2"><circle cx="206" cy="525" r="29"/><circle cx="294" cy="525" r="29"/><circle cx="381" cy="525" r="29"/></g><g fill="#b01800"><circle cx="206" cy="525" r="15"/><circle cx="294" cy="525" r="15"/><circle cx="381" cy="525" r="15"/></g>
        <path d="M0 521H71V568H0z" fill="url(#hatch2)" stroke="#d8e8ea" stroke-width="4"/><use href="#pad" x="46" y="543"/>
        <use href="#sot" x="331" y="694"/><use href="#res" x="485" y="667"/>
        <path class="r" d="M43 180V317L85 320 230 350H265V260M15 317H43M15 575L170 895"/>
        <use href="#via" x="88" y="203"/><use href="#via" x="220" y="260"/><use href="#via" x="220" y="354"/><use href="#via" x="84" y="316"/><use href="#via" x="37" y="449"/><use href="#via" x="536" y="643"/>
      </g>

      <!-- motor driver section -->
      <g transform="translate(1230 500) scale(.33333)">
        <path class="t w1" d="M65 103V527L84 545H247M340 58H123L74 107V380L85 391H190M150 166H115L95 186V367M420 42L470 88H485M550 88H614L643 118V160M235 184L280 229H322M430 229H568L612 185H630M695 184H737L773 220H830M235 373L280 327H322M568 327L612 373H630M695 370H745L780 335H830M677 410V450L660 466H550M485 466H470L422 515M272 496H350M422 532H443L472 562H485M385 742H470"/>
        <path class="t w2" d="M235 373L280 327H322M430 327H568M195 750H278V738H305"/>
        <path class="b w1" d="M95 367V417L173 496H265M15 521H573L589 537V558M248 545V748"/>
        <path class="b w3" d="M15 215L28 229H460L500 271H1050M795 271V384L773 405M677 295H760L773 308V375M330 790H436M436 790L458 811H613"/>
        <path class="t w4" d="M773 375H1050M773 375V408L613 565V790"/>
        <path class="t w3" d="M642 205V262L677 295V340M170 230V268L208 305V340M15 625L45 655H510L547 692V775L513 811H415L370 764H345M548 733H600M15 790H50V785H232L240 790H330M330 770V790M436 780L458 758"/>
        <use href="#res" x="485" y="70"/><use href="#res" x="485" y="448"/><use href="#res" x="485" y="542"/>
        <use href="#sot" x="143" y="145"/><use href="#sot" transform="translate(233 334) scale(-1 1)"/><use href="#sot" x="615" y="145"/><use href="#sot" transform="translate(704 334) scale(-1 1)"/><use href="#sot" transform="translate(421 476) scale(-1 1)"/>
        <path d="M330 246h90v66h-90z" fill="url(#hatch2)"/><path d="M328 246v66M424 246v66" stroke="#d8e8ea" stroke-width="3"/>
        <path d="M323 212H430V346H323z" fill="none" stroke="#44c8ff" stroke-width="3"/><path d="M326 215h102v30H326zM326 312h102v31H326z" fill="#1c8fb5" stroke="#a84a00" stroke-width="2"/><path d="M376 266v24M364 278h24" stroke="#44c8ff" stroke-width="3"/>
        <path d="M167 733H205V799H167z" fill="none" stroke="#44c8ff" stroke-width="3"/><path d="M170 738h31v58h-31z" fill="#a84a00"/><path d="M172 740h28v22h-28zM172 774h28v18h-28z" fill="#1c8fb5"/>
        <path d="M302 728H357V772H302z" fill="none" stroke="#44c8ff" stroke-width="3"/><path d="M306 732h48v38h-48z" fill="#a84a00"/><path d="M318 730v40M304 750h50M340 730v40" class="t w3"/>
        <path d="M460 730H482V769H460z" fill="#a84a00" stroke="#44c8ff" stroke-width="3"/><path d="M463 735h16v14h-16z" fill="#1c8fb5"/>
        <path d="M595 718H632V782H595z" fill="none" stroke="#44c8ff" stroke-width="3"/><path d="M598 722h30v24h-30zM598 755h30v24h-30z" fill="#1c8fb5"/>
        <path class="r" d="M170 205L205 340 196 560 187 780M15 790L185 780 350 740 475 758 613 766H1050"/>
        <g fill="#c6c6c6" stroke="#c06010" stroke-width="3"><circle cx="849" cy="221" r="27"/><circle cx="849" cy="334" r="27"/></g><g fill="#b01800"><circle cx="849" cy="221" r="13"/><circle cx="849" cy="334" r="13"/></g>
        <use href="#via" x="170" y="230"/><use href="#via" x="95" y="367"/><use href="#via" x="265" y="496"/><use href="#via" x="247" y="545"/><use href="#via" x="246" y="749"/><use href="#via" x="330" y="790"/><use href="#via" x="435" y="790"/><use href="#via" x="613" y="811"/><use href="#via" x="589" y="561"/><use href="#via" x="677" y="295"/><use href="#via" x="773" y="375"/>
      </g>

      <g class="desig">
        <text x="367" y="365">LED5</text><text x="367" y="752">LED6</text><text x="1829" y="409">LED4</text><text x="1835" y="513">LED3</text><text x="1831" y="610">LED2</text><text x="1818" y="721">LED1</text>
        <text x="479" y="499">U5</text><text x="479" y="656">S1</text><text x="1769" y="417">Q3</text><text x="1769" y="574">Q4</text><text x="1769" y="732">Q2</text>
        <text x="1241" y="362">C5</text><text x="1313" y="346">C1</text><text x="1313" y="378">C2</text><text x="1359" y="416">VR3</text><text x="1244" y="439">P1</text>
        <text x="1391" y="488">R4</text><text x="1391" y="519">R2</text><text x="1391" y="645">R3</text><text x="1391" y="676">R5</text><text x="1341" y="497">Q8</text>
        <text x="1277" y="544">Q11</text><text x="1277" y="607">Q12</text><text x="1338" y="566">L8</text><text x="1341" y="654">Q4</text><text x="1435" y="544">S7</text><text x="1435" y="607">Q5</text>
        <text x="1286" y="741">C1</text><text x="1331" y="738">U1</text><text x="1384" y="739">C3</text><text x="1429" y="735">C7</text>
      </g>
    </svg>

    <div class="layers">
      <div class="ls"><i></i><span>LS</span></div>
      <div class="ly y1"><i class="c1"></i>Top Layer</div>
      <div class="ly y2"><i class="c2"></i>Bottom Layer</div>
      <div class="ly y3 on"><i class="c3"></i>Outline</div>
      <div class="ly y4"><i class="c3"></i>3D Top</div>
      <div class="ly y5"><i class="c5"></i>Courtyard Top</div>
      <div class="ly y6"><i class="c6"></i>Top Overlay</div>
      <div class="ly y7"><i class="c7"></i>Bottom Overlay</div>
      <div class="ly y8"><i class="c8"></i>Top Paste</div>
      <div class="ly y9"><i class="c9"></i>Bottom Paste</div>
      <div class="ly y10"><i class="c10"></i>Top Solder</div>
      <div class="ly y11"><i class="c11"></i>Bottom Solder</div>
      <div class="ly y12"><i class="c12"></i>Drill Guide</div>
      <div class="ly y13"><i class="c13"></i>Keep-Out Layer</div>
      <div class="ly y14"><i class="c14"></i>Drill Drawing</div>
      <div class="ly y15"><i class="c15"></i>Multi-Layer</div>
    </div>
  </section>
</main>

<footer class="status">
  <div class="s1"><span class="sxy">X:-3035mil Y:2644mil</span><span class="sgrid">Grid: 1mil</span><span>(Hotspot Snap)</span></div>
  <div class="s2"></div>
</footer>

<div class="dialog">
  <div class="dtitle">Commit to Version Control<div class="dclose"><svg width="9" height="9" viewBox="0 0 9 9"><path d="M1 1l7 7M8 1L1 8" stroke="#fff" stroke-width="1.800"/></svg></div></div>
  <div class="dbody">
    <p>Select the files to commit to version control.</p>
    <div class="list">
      <div class="lhead"><span class="hpath">Path<svg width="9" height="9" viewBox="0 0 9 9"><path d="M1 8L4.500 1" stroke="#888"/><path d="M4.500 1L8 8H1" fill="none" stroke="#fff"/></svg></span><span class="hstat">Status</span></div>
      <div class="f top"><svg class="fex" width="9" height="9"><use href="#i-minus"/></svg><i class="cb part"></i><svg width="14" height="13"><use href="#i-dir"/></svg><span class="fpath">C:\Users\Public\Documents\Altium\car</span></div>
      <div class="kids">
        <div class="f off"><i class="cb"></i><svg width="15" height="12"><use href="#i-sch"/></svg><span class="fn">BCM.SchDoc</span><span class="fs">Not in version control</span></div>
        <div class="f"><i class="cb ck"></i><svg width="15" height="14"><use href="#i-har"/></svg><span class="fn">BCM20732S.Harness</span><span class="fs">Not in version control</span></div>
        <div class="f off"><i class="cb"></i><svg width="15" height="14"><use href="#i-lib"/></svg><span class="fn">Car Schematic Library NPO.SchLib</span><span class="fs">Not in version control</span></div>
        <div class="f off"><i class="cb"></i><svg width="15" height="14"><use href="#i-lib"/></svg><span class="fn">Car Schematic Library NPOsp.SchLib</span><span class="fs">Not in version control</span></div>
        <div class="f"><i class="cb ck"></i><svg width="15" height="14"><use href="#i-prj"/></svg><span class="fn">car.PrjPcb</span><svg class="mod" width="11" height="11"><use href="#i-warn"/></svg><span class="fs">Modified</span></div>
        <div class="f off"><i class="cb"></i><svg width="15" height="16"><use href="#i-blank"/></svg><span class="fn">car.PrjPcbStructure</span><span class="fs">Not in version control</span></div>
        <div class="f"><i class="cb ck"></i><svg width="15" height="14"><use href="#i-har"/></svg><span class="fn">Debug Interface.Harness</span><span class="fs">Not in version control</span></div>
        <div class="f"><i class="cb ck"></i><svg width="15" height="14"><use href="#i-har"/></svg><span class="fn">Front Steering Motor.Harness</span><span class="fs">Not in version control</span></div>
        <div class="f"><i class="cb ck"></i><svg width="15" height="14"><use href="#i-har"/></svg><span class="fn">Left Driving Motor.Harness</span><span class="fs">Not in version control</span></div>
        <div class="f"><i class="cb ck"></i><svg width="15" height="12"><use href="#i-pcb"/></svg><span class="fn">PCB.PWPcbDoc</span><svg class="mod" width="11" height="11"><use href="#i-warn"/></svg><span class="fs">Modified</span></div>
        <div class="f"><i class="cb ck"></i><svg width="15" height="14"><use href="#i-har"/></svg><span class="fn">Right Driving Motor.Harness</span><span class="fs">Not in version control</span></div>
      </div>
    </div>
    <div class="clabel"><u>C</u>omment</div>
    <div class="ctext"></div>
    <div class="dbtns"><div class="btn ok">OK</div><div class="btn">Cancel</div></div>
  </div>
</div>
<svg class="cursor" width="13" height="20" viewBox="0 0 13 20"><path d="M.5.7v15.500l3.500-3.300 2.500 5.800 2.700-1.100-2.500-5.600h5z" fill="#fff" stroke="#223"/></svg>
</body>
</html>
```
FILE: styles.css
```css
* { box-sizing: border-box; }
body { margin: 0; width: 1920px; height: 1080px; overflow: hidden; display: flex; flex-direction: column; font: 11px/16px "Noto Sans", "Open Sans", sans-serif; color: #000; background: #a8a8a8; white-space: nowrap; position: relative; }
svg { flex: none; display: block; }
i { font-style: normal; flex: none; }
.defs { position: absolute; }

/* title bar and menu */
.titlebar { height: 53px; background: linear-gradient(#ebebeb, #fff 48px); border-bottom: 1px solid #8a9097; display: flex; flex-direction: column; }
.caption { height: 27px; display: grid; grid-template-columns: 820px 280px 1fr; }
.quick { display: flex; align-items: flex-start; padding: 4px 0 0 3px; }
.quick .bar { width: 1px; height: 12px; margin-top: 2px; background: #333; }
.q-logo { margin-right: 6px; }
.q-open { margin-left: 7px; margin-right: 6px; }
.q-save { margin-right: 7px; }
.q-undo, .q-redo { margin-top: 1px; }
.q-undo { margin-right: 5px; }
.q-redo { margin-right: 10px; }
.apptitle { text-align: center; font-size: 14px; line-height: 25px; letter-spacing: -.1px; color: #1a1a1a; }
.winbtns { display: flex; justify-content: flex-end; gap: 8px; padding-right: 3px; }
.winclose { width: 45px; height: 19px; background: #bebebe; display: flex; align-items: center; justify-content: center; }
.menubar { height: 26px; display: flex; }
.file { width: 56px; height: 25px; border: 1px solid #1c84bd; border-radius: 3px 3px 0 0; background: linear-gradient(#45a8de, #1f8dc9 55%, #2397d2); color: #fff; text-align: center; line-height: 25px; }
.mtab { line-height: 28px; }
.mtab.on { width: 55px; height: 26px; margin: 1px 0 0 5px; border: 1px solid #a9adb2; border-bottom: 0; border-radius: 4px 4px 0 0; background: #fff; text-align: center; line-height: 25px; }
.m-view { margin-left: 14px; width: 52px; }
.m-proj { width: 62px; }
.m-tools { width: 54px; }
.search { margin: 1px 0 0 auto; width: 230px; height: 22px; border: 1px solid #a0a0a0; background: #fff; display: flex; align-items: center; justify-content: space-between; padding: 0 2px 0 8px; font-style: italic; color: #555; letter-spacing: .12px; }
.chev { margin: 8px 8px 0 6px; }

/* ribbon */
.ribbon { height: 93px; display: flex; background: linear-gradient(#fff, #f3f5f7 40%, #e2e6eb 88px, #8a9097 89px, #8a9097 90px, #d9dde1 90px); color: #333; }
.group { height: 89px; padding-top: 5px; display: flex; flex-direction: column; border-right: 1px solid #b4b8bd; flex: none; }
.gbody { height: 67px; display: flex; }
.glabel { text-align: center; color: #6b7280; }
.g1 { width: 62px; } .g2 { width: 107px; } .g3 { width: 159px; } .g4 { width: 312px; padding-left: 6px; } .g5 { width: 67px; } .g6 { width: 80px; } .g7 { width: 218px; } .g8 { width: 291px; } .g9 { width: 280px; }
.g4 .glabel { padding-right: 10px; }
.g3 .glabel, .g5 .glabel, .g6 .glabel, .g8 .glabel, .g9 .glabel { padding-right: 2px; }
.big { flex: none; display: flex; flex-direction: column; align-items: center; padding-top: 4px; line-height: 13px; }
.big svg { margin-bottom: 4px; }
.big span { height: 13px; display: flex; }
.g1 .big { width: 60px; } .g2 .big { width: 52px; } .g3 .big { width: 53px; } .g5 .big { width: 64px; } .g6 .big { width: 76px; } .g7 .big { width: 84px; }
.big.w62 { width: 62px; } .big.w48 { width: 48px; } .big.w76 { width: 76px; } .big.w38 { width: 38px; }
b { align-self: center; width: 0; height: 0; border: 3px solid transparent; border-top-color: #666; border-bottom: 0; margin-left: 4px; margin-top: -2px; flex: none; }
.big .solo { margin: -1px 0 0; }
.col { flex: none; }
.cmd { height: 22px; display: flex; align-items: center; gap: 3px; }
.cmd b { margin-left: 2px; }
.two { padding-top: 4px; }
.two .cmd { height: 29px; }
.dim { color: #999; }
.dim .cmd { padding-bottom: 0; margin-left: -1px; }
.c1.col { width: 56px; } .c2.col { width: 75px; } .c3.col { width: 91px; }
.gridcol { margin-left: 9px; width: 149px; letter-spacing: .08px; }
.snap { padding-left: 1px; }
.snap span { width: 53px; }
.combo { width: 80px; height: 22px; border: 1px solid #c5c8cc; background: #fff; color: #000; display: flex; justify-content: space-between; align-items: center; padding: 0 2px 0 3px; }
.gray svg { color: #666; }
.imp { margin-left: -3px; padding-left: 2px; gap: 2px; width: 66px; border: 1px solid #c39738; border-radius: 2px; background: linear-gradient(#f7cf63, #fcdc68 50%, #ffea82); }
.imp svg { color: #2f9fd8; }

/* projects panel */
.work { height: 910px; display: flex; padding: 3px; border-bottom: 1px solid #666; }
.panel { width: 313px; margin-right: 3px; background: #dedede; display: flex; flex-direction: column; height: 904px; }
.phead { height: 23px; background: linear-gradient(#b3d0e5, #a3c3d9); display: flex; align-items: center; justify-content: space-between; padding: 0 0 0 5px; font-weight: 700; letter-spacing: -.2px; }
.psel { display: flex; gap: 3px; margin: 10px 10px 8px; height: 25px; }
.pinput { width: 222px; border: 1px solid #8c8c8c; background: #f3f3f3; padding-left: 5px; line-height: 22px; }
.pbtn { width: 68px; border: 1px solid #acacac; background: linear-gradient(#f0f0f0, #e5e5e5); text-align: center; line-height: 24px; }
.tree { margin: 0 10px 0 11px; height: 829px; border: 1px solid #828790; background: #fff; padding: 4px 4px 0 5px; letter-spacing: .08px; }
.row { height: 16px; display: flex; align-items: center; }
.row .ex { width: 9px; margin-right: 4px; }
.row .ic { margin-right: 2px; }
.row .nm { flex: 1; height: 16px; border-bottom: 1px solid #dcdcdc; padding-left: 3px; line-height: 17px; }
.st { width: 18px; height: 16px; border: solid #dcdcdc; border-width: 0 0 1px 1px; display: flex; align-items: center; justify-content: center; padding-right: 2px; }
.st + .st { border-right: 1px solid #dcdcdc; padding-right: 1px; }
.d1 { padding-left: 12px; } .d2 { padding-left: 24px; } .d3 { padding-left: 36px; } .d4 { padding-left: 48px; }
.d1 .ic { margin-right: 1px; }
.root .ic, .d2 .ic, .d3 .ic, .d4 .ic { margin-right: 0; }
.root .ex { margin-right: 3px; }
.root .ic { margin-right: 1px; }
.d2.sel .ic { margin-right: 2px; }
.root { font-weight: 700; letter-spacing: -.25px; }
.root .nm, .root .st { background: #9ab4d2; border-color: #9ab4d2; }
.root .nm { padding-left: 2px; }
.sel .nm, .sel .st { background: #3399ff; border-color: #3399ff; color: #fff; }
.red svg { color: #e00; } .pnk svg { color: #f08080; } .gry svg { color: #999; }

/* document area */
.editor { width: 1598px; display: flex; flex-direction: column; }
.doctabs { height: 27px; display: flex; border-bottom: 3px solid #dcdcdc; color: #fff; letter-spacing: .05px; }
.dt { display: flex; align-items: center; gap: 5px; height: 24px; }
.dhome { width: 60px; padding-left: 5px; gap: 4px; }
.dt.on { width: 108px; background: #dcdcdc; color: #000; padding-left: 7px; gap: 6px; margin-right: 6px; letter-spacing: -.1px; }
.d-front { width: 188px; } .d-debug { width: 161px; } .d-batt { width: 115px; }
.board { background: #404040; shape-rendering: crispEdges; }
.outline { fill: #000; stroke: #4a6cff; stroke-width: 2; }
.outdash { fill: none; stroke: #c8c8b8; stroke-width: 1; stroke-dasharray: 4 4; }
.t, .b, .r { fill: none; vector-effect: non-scaling-stroke; }
.t { stroke: #1c8fb5; } .b { stroke: #24bfc0; } .r { stroke: #9b9b70; stroke-width: 1; }
.w1 { stroke-width: 1; } .w2 { stroke-width: 2; } .w3 { stroke-width: 3; } .w4 { stroke-width: 4; }
.desig { font: 7px "Liberation Mono", monospace; fill: #d8e8ea; letter-spacing: .6px; }

.layers { height: 20px; background: #f0f0f0; display: flex; border-top: 1px solid #ddd; letter-spacing: -.1px; }
.ls { width: 46px; height: 15px; margin: 2px 3px 0 3px; border: 1px solid #777; display: flex; color: #888; line-height: 14px; }
.ls i { width: 25px; background: #4a6cff; border-right: 1px solid #777; }
.ls span { flex: 1; text-align: center; }
.ly { height: 18px; background: #fff; border: 1px solid #ccc; border-width: 0 1px 1px 0; display: flex; align-items: center; gap: 5px; padding-left: 6px; line-height: 18px; flex: none; }
.ly i { width: 10px; height: 10px; border: 1px solid #999; margin-top: -1px; }
.ly.on { background: #dcdcdc; font-weight: 700; letter-spacing: -.4px; }
.y1 { width: 73px; } .y2 { width: 91px; } .y3 { width: 63px; } .y4 { width: 61px; } .y5 { width: 99px; } .y6 { width: 84px; } .y7 { width: 105px; } .y8 { width: 74px; } .y9 { width: 92px; } .y10 { width: 80px; } .y11 { width: 99px; } .y12 { width: 81px; } .y13 { width: 103px; } .y14 { width: 93px; } .y15 { width: 82px; }
.ly .c1 { background: #1c8fb5; } .ly .c2 { background: #24bfb5; } .ly .c3 { background: #4a6cff; } .ly .c5 { background: #44c8ff; } .ly .c6 { background: #cfe0e4; } .ly .c7 { background: #bcd0cf; } .ly .c8 { background: #ffa970; } .ly .c9 { background: #93e1fb; } .ly .c10 { background: #b05000; } .ly .c11 { background: #00607f; } .ly .c12 { background: #800000; } .ly .c13 { background: #9a1eff; } .ly .c14 { background: #ff0022; } .ly .c15 { background: #c0c0c0; }

.status { flex: 1; background: #f0f0f0; border-top: 1px solid #bbb; display: flex; padding-top: 4px; }
.s1 { width: 486px; height: 17px; border-right: 1px solid #a0a0a0; padding-left: 5px; display: flex; line-height: 14px; }
.sxy { width: 114px; letter-spacing: -.1px; } .sgrid { width: 70px; }
.s2 { width: 486px; height: 17px; border-right: 1px solid #a0a0a0; }

/* commit dialog */
.dialog { position: absolute; left: 684px; top: 256px; width: 551px; height: 607px; background: #dfcb75; border: 1px solid #a8954c; padding: 0 6px 6px; box-shadow: 0 0 3px rgba(0,0,0,.4); }
.dtitle { height: 29px; text-align: center; font-size: 14px; line-height: 29px; letter-spacing: .15px; color: #3a3419; position: relative; }
.dclose { position: absolute; right: 0; top: 0; width: 31px; height: 20px; background: #c75050; display: flex; align-items: center; justify-content: center; }
.dbody { height: 571px; background: #f0f0f0; border: 1px solid #b9a660; padding: 7px 8px 0; }
.dbody p { margin: 0 0 16px; }
.list { height: 288px; border: 1px solid #8f9197; background: #fff; }
.lhead { height: 18px; background: #f0f0f0; border-bottom: 1px solid #a0a0a0; display: flex; line-height: 18px; }
.hpath { width: 345px; border-right: 1px solid #888; padding: 0 7px 0 3px; display: flex; justify-content: space-between; align-items: center; }
.hstat { padding-left: 3px; }
.f { height: 16px; display: flex; align-items: center; }
.top { padding-left: 3px; }
.fex { margin-right: 6px; }
.cb { width: 11px; height: 11px; border: 1px solid #777; background: #fff; }
.part { margin-right: 4px; background: #aaa; box-shadow: inset 0 0 0 1px #fff; }
.ck { display: flex; justify-content: center; }
.ck::after { content: ""; width: 4px; height: 7px; border: solid #000; border-width: 0 2px 2px 0; transform: rotate(42deg); }
.fpath { width: 297px; height: 16px; margin-left: 1px; border: 1px dotted #000; padding-left: 1px; line-height: 15px; letter-spacing: -.12px; }
.kids { margin-left: 23px; border-left: 1px dotted #777; height: 169px; }
.kids .f::before { content: ""; width: 8px; margin-right: 2px; border-top: 1px dotted #777; }
.kids .cb { margin-right: 4px; }
.kids .fn { width: 284px; padding-left: 2px; }
.kids .fs { margin-left: 15px; padding-top: 2px; letter-spacing: .04px; }
.mod { margin-right: -11px; }
.off { color: #b8b8b8; }
.off .fn { letter-spacing: -.12px; }
.clabel { margin-top: 15px; height: 17px; }
.ctext { height: 169px; border: 1px solid #abadb3; background: #fff; }
.dbtns { display: flex; justify-content: flex-end; gap: 9px; margin-top: 8px; padding-right: 1px; }
.btn { width: 71px; height: 23px; border: 1px solid #acacac; background: linear-gradient(#f0f0f0, #e5e5e5); text-align: center; line-height: 22px; }
.btn.ok { border-color: #7eb4ea; background: linear-gradient(#ecf4fc, #dcecfc); }
.cursor { position: absolute; left: 1119px; top: 827px; }
```
